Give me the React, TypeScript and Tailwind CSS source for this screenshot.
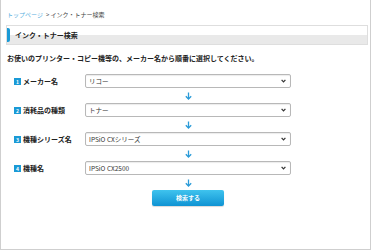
const ROWS = [
  { no: '1', label: 'メーカー名', value: 'リコー' },
  { no: '2', label: '消耗品の種類', value: 'トナー' },
  { no: '3', label: '機種シリーズ名', value: 'IPSiO CXシリーズ' },
  { no: '4', label: '機種名', value: 'IPSiO CX2500' },
]

function ArrowIcon() {
  return (
    <svg width="7" height="8" viewBox="0 0 7 8" fill="none">
      <path d="M3.5 0.5V7" stroke="#2a9bd8" strokeWidth="1.3" />
      <path d="M0.8 4.2L3.5 7L6.2 4.2" stroke="#2a9bd8" strokeWidth="1.3" />
    </svg>
  )
}

function FakeSelect({ value }: { value: string }) {
  return (
    <div className="flex h-[14px] w-[206px] items-center justify-between rounded-[2px] border border-[#b8b8b8] bg-white pr-[4px] pl-[3px] shadow-[inset_0_1px_1px_rgba(0,0,0,0.08)]">
      <span className="text-[6.5px] leading-none text-[#333]">{value}</span>
      <svg width="5" height="4" viewBox="0 0 5 4" fill="none">
        <path d="M0.6 0.8L2.5 2.9L4.4 0.8" stroke="#333" strokeWidth="1.2" />
      </svg>
    </div>
  )
}

export default function App() {
  return (
    <div
      className="h-[250px] w-[371px] border-x border-b border-[#cfcfcf] bg-white text-[#222]"
      style={{ fontFamily: '"Noto Sans CJK JP", "Noto Sans", sans-serif' }}
    >
      {/* Breadcrumb */}
      <div className="flex h-[25px] items-center pt-[5px] pl-[6px] text-[6px] leading-none">
        <span className="text-[#5aafe0]">トップページ</span>
        <span className="ml-[3px] text-[#444]">&gt; インク・トナー検索</span>
      </div>

      {/* Heading */}
      <div className="mr-[2px] ml-[5px] flex h-[20px] items-center border border-[#dedede] bg-[linear-gradient(#ffffff_50%,#e9e9e9_50%)]">
        <div className="h-[14px] w-[3px] rounded-r-[2px] bg-[#1a9ad6]" />
        <span className="ml-[5px] text-[7px] leading-none font-bold">インク・トナー検索</span>
      </div>

      {/* Lead */}
      <p className="mt-[10px] pl-[6px] text-[7px] leading-none font-bold">
        お使いのプリンター・コピー機等の、メーカー名から順番に選択してください。
      </p>

      {/* Form */}
      <div className="mt-[12px] flex flex-col pl-[13px]">
        {ROWS.map((row, i) => (
          <div key={row.no} className="flex flex-col">
            <div className="flex items-center">
              <div className="flex w-[71px] items-center">
                <span className="flex h-[7px] w-[7px] items-center justify-center bg-[#1a9ad6] text-[5px] leading-none font-bold text-white">
                  {row.no}
                </span>
                <span className="ml-[2px] text-[7px] leading-none font-bold">{row.label}</span>
              </div>
              <FakeSelect value={row.value} />
            </div>
            {i < ROWS.length - 1 && (
              <div className="ml-[71px] flex h-[15px] w-[206px] items-center justify-center">
                <ArrowIcon />
              </div>
            )}
          </div>
        ))}
        <div className="ml-[71px] flex w-[206px] flex-col items-center">
          <div className="flex h-[15px] items-center">
            <ArrowIcon />
          </div>
          <button
            type="button"
            className="flex h-[16px] w-[72px] items-center justify-center rounded-[2px] bg-[linear-gradient(#3fc3ee,#0f93d3)] text-[6px] leading-none font-bold text-white shadow-[0_1px_1px_rgba(0,0,0,0.15)]"
          >
            検索する
          </button>
        </div>
      </div>
    </div>
  )
}
